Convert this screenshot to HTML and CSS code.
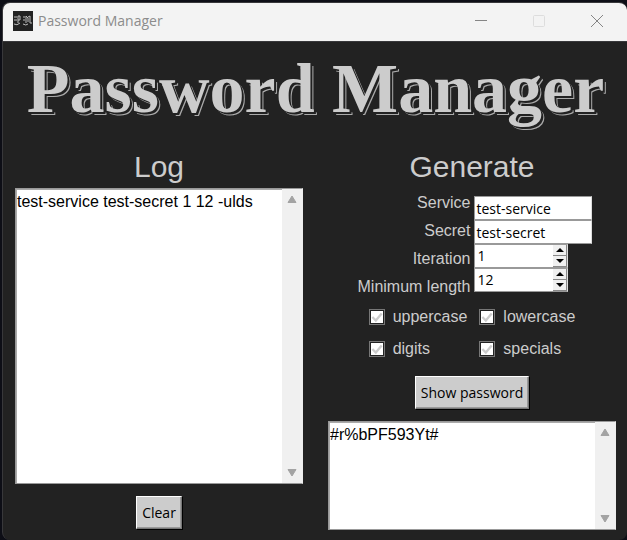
FILE: index.html
```html
<!DOCTYPE html>
<html lang="en">
<head>
<meta charset="utf-8">
<title>Password Manager</title>
<link rel="stylesheet" href="styles.css">
</head>
<body>
<div class="window">
  <header class="titlebar">
    <svg class="app-icon" viewBox="0 0 20 20" aria-hidden="true">
      <rect width="20" height="20" fill="#222"/>
      <g fill="none" stroke="#bbb">
        <path d="M1 6h3M1 9h3M5 5v7M5 5h2v4h-2M1 13q3 2 6-1"/>
        <path d="M10 6h2M10 9h2M13 5v7M13 5l2 2v4M15 6l2-1v7h2M10 13q3 2 5 0"/>
      </g>
    </svg>
    <span class="window-title">Password Manager</span>
    <div class="window-controls">
      <button class="window-button" type="button" aria-label="Minimize"><svg viewBox="0 0 12 12"><path d="M0 5.500h12"/></svg></button>
      <button class="window-button" type="button" aria-label="Maximize" disabled><svg viewBox="0 0 12 12"><rect x=".5" y=".5" width="11" height="11" rx="1"/></svg></button>
      <button class="window-button" type="button" aria-label="Close"><svg viewBox="0 0 12 12"><path d="M0 0l12 12M12 0L0 12"/></svg></button>
    </div>
  </header>
  <main class="content">
    <h1 class="banner">Password Manager</h1>
    <div class="columns">
      <section class="panel">
        <h2 class="heading" id="log-heading">Log</h2>
        <div class="text-box log">
          <textarea aria-labelledby="log-heading">test-service test-secret 1 12 -ulds</textarea>
          <div class="scrollbar">
            <svg viewBox="0 0 12 10"><path d="M2 8.500h8L6 2z"/></svg>
            <svg viewBox="0 0 12 10"><path d="M2 1.500h8L6 8z"/></svg>
          </div>
        </div>
        <button class="button" type="button">Clear</button>
      </section>
      <section class="panel">
        <h2 class="heading">Generate</h2>
        <div class="fields">
          <div class="labels">
            <label for="service">Service</label>
            <label for="secret">Secret</label>
            <label for="iteration">Iteration</label>
            <label for="length">Minimum length</label>
          </div>
          <div class="entries">
            <input class="entry" id="service" type="text" value="test-service">
            <input class="entry" id="secret" type="text" value="test-secret">
            <div class="spinbox">
              <input class="spin-value" id="iteration" type="number" value="1">
              <div class="spin-buttons">
                <button type="button" aria-label="Increase iteration"><svg viewBox="0 0 8 4"><path d="M0 4h8L4 0z"/></svg></button>
                <button type="button" aria-label="Decrease iteration"><svg viewBox="0 0 8 4"><path d="M0 0h8L4 4z"/></svg></button>
              </div>
            </div>
            <div class="spinbox">
              <input class="spin-value" id="length" type="number" value="12">
              <div class="spin-buttons">
                <button type="button" aria-label="Increase length"><svg viewBox="0 0 8 4"><path d="M0 4h8L4 0z"/></svg></button>
                <button type="button" aria-label="Decrease length"><svg viewBox="0 0 8 4"><path d="M0 0h8L4 4z"/></svg></button>
              </div>
            </div>
          </div>
        </div>
        <div class="options">
          <label class="option"><span class="tick"><input type="checkbox" checked><svg viewBox="0 0 12 12"><path d="M2 6l3 3 5-6"/></svg></span>uppercase</label>
          <label class="option"><span class="tick"><input type="checkbox" checked><svg viewBox="0 0 12 12"><path d="M2 6l3 3 5-6"/></svg></span>lowercase</label>
          <label class="option"><span class="tick"><input type="checkbox" checked><svg viewBox="0 0 12 12"><path d="M2 6l3 3 5-6"/></svg></span>digits</label>
          <label class="option"><span class="tick"><input type="checkbox" checked><svg viewBox="0 0 12 12"><path d="M2 6l3 3 5-6"/></svg></span>specials</label>
        </div>
        <button class="button" type="button">Show password</button>
        <div class="text-box result">
          <textarea aria-label="Generated password">#r%bPF593Yt#</textarea>
          <div class="scrollbar">
            <svg viewBox="0 0 12 10"><path d="M2 8.500h8L6 2z"/></svg>
            <svg viewBox="0 0 12 10"><path d="M2 1.500h8L6 8z"/></svg>
          </div>
        </div>
      </section>
    </div>
  </main>
</div>
</body>
</html>
```
FILE: styles.css
```css
* {
  box-sizing: border-box;
}

body {
  margin: 0;
  padding: 2px 0 0 2px;
  min-height: 100vh;
  display: flex;
  background: #0d0e16;
  color: #ccc;
  font: 16px/20px "Liberation Sans", Arial, sans-serif;
}

button,
input,
textarea {
  margin: 0;
  padding: 0;
  border: 0;
  border-radius: 0;
  font: inherit;
  color: #000;
}

.window {
  flex: 1;
  display: flex;
  flex-direction: column;
  border: 1px solid #38383b;
  border-right: 0;
  border-bottom: 0;
  border-radius: 8px;
  overflow: hidden;
  background: #222;
}

.titlebar {
  display: flex;
  align-items: center;
  height: 39px;
  padding: 0 1px 2px 10px;
  border-bottom: 1px solid #38383b;
  background: #f3f3f3;
}

.app-icon {
  width: 20px;
  height: 20px;
}

.window-title {
  flex: 1;
  margin-left: 5px;
  color: #8c8c8c;
  font: 14px/20px "Open Sans", "Noto Sans", sans-serif;
}

.window-controls {
  display: flex;
}

.window-button {
  display: flex;
  align-items: center;
  justify-content: center;
  width: 58px;
  height: 36px;
  background: none;
}

.window-button svg {
  width: 12px;
  height: 12px;
  fill: none;
  stroke: #858585;
}

.window-button:disabled svg {
  stroke: #ddd;
}

.content {
  flex: 1;
  padding: 0 11px 10px 12px;
}

.banner {
  margin: 0;
  height: 107px;
  text-align: center;
  white-space: nowrap;
  color: #ccc;
  font: bold 70px/94px "Old English Text MT", "Liberation Serif", serif;
  text-shadow: 1px 1px #222, 2px 2px #222, 3px 3px #aaa;
}

.columns {
  display: grid;
  grid-template-columns: 1fr 1fr;
  column-gap: 25px;
}

.panel {
  display: flex;
  flex-direction: column;
  align-items: center;
}

.heading {
  margin: 0;
  font-size: 30px;
  font-weight: normal;
  line-height: 36px;
}

.text-box {
  display: flex;
  align-self: stretch;
  border: 1px solid #999;
  border-right-color: #eee;
  background: #fff;
}

.text-box textarea {
  flex: 1;
  min-width: 0;
  padding: 2px 0;
  border: 1px solid #aaa;
  border-right: 0;
  border-bottom: 0;
  outline: 0;
  resize: none;
  overflow: hidden;
  background: #fff;
}

.scrollbar {
  display: flex;
  flex-direction: column;
  justify-content: space-between;
  align-items: center;
  width: 20px;
  padding: 5px 0;
  background: #f0f0f0;
}

.scrollbar svg {
  width: 12px;
  height: 10px;
  fill: #a3a3a3;
  stroke: #a3a3a3;
  stroke-width: 1px;
  stroke-linejoin: round;
}

.log {
  margin-top: 3px;
  margin-bottom: 12px;
  height: 296px;
}

.result {
  margin-top: 12px;
  height: 109px;
}

.button {
  height: 33px;
  padding: 0 5px;
  border: 1px solid;
  border-color: #fff #777 #777 #fff;
  background: #ccc;
  box-shadow: inset -1px -1px #999, 1px 1px #000;
  font: 14px/20px "Open Sans", "Noto Sans", sans-serif;
}

.fields {
  display: flex;
  gap: 4px;
  margin-top: 4px;
  padding-left: 6px;
}

.labels {
  display: flex;
  flex-direction: column;
  text-align: right;
  line-height: 28px;
}

.entries {
  display: flex;
  flex-direction: column;
  align-items: flex-start;
  padding-top: 7px;
}

.entry,
.spinbox {
  height: 24px;
  border: 1px solid #999;
  border-right-color: #ddd;
  background: #fff;
}

.entry {
  width: 118px;
  padding-left: 1px;
}

.entry,
.spin-value {
  font: 14px/20px "Open Sans", "Noto Sans", sans-serif;
}

.spinbox {
  display: flex;
  width: 94px;
}

.spin-value {
  flex: 1;
  min-width: 0;
  padding-left: 2px;
  background: #fff;
  appearance: textfield;
}

.spin-value::-webkit-inner-spin-button {
  appearance: none;
}

.spin-buttons {
  display: grid;
  grid-template-rows: 1fr 1fr;
  width: 14px;
}

.spin-buttons button {
  display: flex;
  align-items: center;
  justify-content: center;
  border-right: 1px solid #888;
  border-bottom: 1px solid #888;
  background: #f0f0f0;
}

.spin-buttons svg {
  width: 8px;
  height: 4px;
}

.options {
  display: grid;
  grid-template-columns: auto auto;
  column-gap: 12px;
}

.option {
  display: flex;
  align-items: center;
  gap: 8px;
  height: 32px;
}

.tick {
  display: grid;
  width: 16px;
  height: 16px;
  border: 1px solid #777;
}

.tick input,
.tick svg {
  grid-area: 1 / 1;
}

.tick input {
  appearance: none;
  width: 14px;
  height: 14px;
  border: 1px solid #222;
  background: #fff;
}

.tick svg {
  width: 14px;
  height: 14px;
  visibility: hidden;
  pointer-events: none;
  fill: none;
  stroke: #ccc;
  stroke-width: 2px;
}

.tick input:checked + svg {
  visibility: visible;
}

.options + .button {
  margin-top: 11px;
}
```
